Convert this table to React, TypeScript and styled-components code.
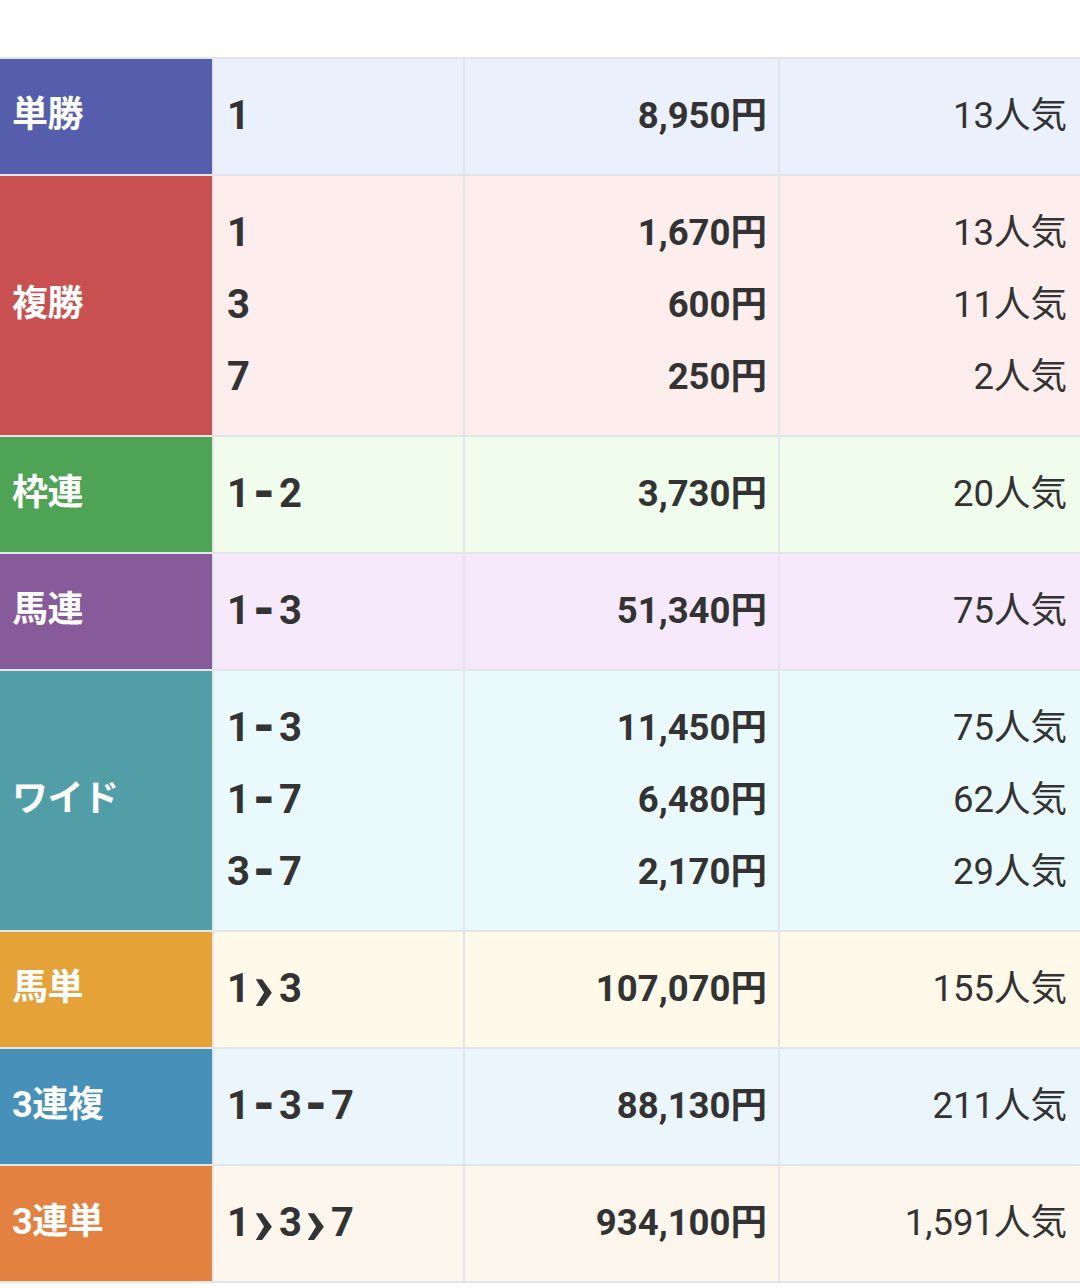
import React from "react";
import styled, { createGlobalStyle } from "styled-components";

const Global = createGlobalStyle`
  html, body { margin: 0; padding: 0; background: #ffffff; }
  body { font-family: Roboto, "Noto Sans CJK JP", sans-serif; color: #333333; }
`;

const Page = styled.div`
  width: 1080px;
  padding-top: 57px;
`;

const Table = styled.div`
  display: flex;
  flex-direction: column;
  gap: 2px;
  background: #e3e5ea;
  padding: 2px 0;
`;

const Row = styled.div`
  display: grid;
  grid-template-columns: 212px 249px 313px 1fr;
  column-gap: 2px;
`;

const Label = styled.div<{ $color: string }>`
  background: ${(p) => p.$color};
  color: #ffffff;
  font-weight: 700;
  font-size: 36px;
  line-height: 36px;
  display: flex;
  align-items: center;
  padding: 0 0 4px 12px;
  letter-spacing: -0.5px;
`;

const Cell = styled.div<{ $bg: string; $align?: "left" | "right"; $pr?: number }>`
  background: ${(p) => p.$bg};
  padding: 20.5px ${(p) => p.$pr ?? 13}px 22.5px 13px;
  display: flex;
  flex-direction: column;
  align-items: ${(p) => (p.$align === "right" ? "flex-end" : "flex-start")};
`;

const Line = styled.div<{ $weight: number; $size?: number }>`
  font-size: ${(p) => p.$size ?? 36.5}px;
  line-height: 72px;
  height: 72px;
  font-weight: ${(p) => p.$weight};
  color: #333333;
  white-space: nowrap;
`;

const Sep = styled.span<{ $kind: "dash" | "arrow" }>`
  display: inline-flex;
  justify-content: center;
  width: 15px;
  margin: 0 7.5px 0 6.5px;
  transform: ${(p) =>
    p.$kind === "dash" ? "scale(0.75, 1.5)" : "translateY(-1px) scale(1.75, 1.7)"};
`;

type Bet = {
  name: string;
  color: string;
  bg: string;
  items: { combo: string; price: string; pop: string }[];
};

const bets: Bet[] = [
  { name: "単勝", color: "#545ead", bg: "#eaf0fc", items: [{ combo: "1", price: "8,950円", pop: "13人気" }] },
  {
    name: "複勝",
    color: "#c85050",
    bg: "#fdeded",
    items: [
      { combo: "1", price: "1,670円", pop: "13人気" },
      { combo: "3", price: "600円", pop: "11人気" },
      { combo: "7", price: "250円", pop: "2人気" },
    ],
  },
  { name: "枠連", color: "#4ea354", bg: "#f0fcec", items: [{ combo: "1-2", price: "3,730円", pop: "20人気" }] },
  { name: "馬連", color: "#875a9a", bg: "#f7e9fc", items: [{ combo: "1-3", price: "51,340円", pop: "75人気" }] },
  {
    name: "ワイド",
    color: "#519ea7",
    bg: "#eaf9fc",
    items: [
      { combo: "1-3", price: "11,450円", pop: "75人気" },
      { combo: "1-7", price: "6,480円", pop: "62人気" },
      { combo: "3-7", price: "2,170円", pop: "29人気" },
    ],
  },
  { name: "馬単", color: "#e4a239", bg: "#fef9e9", items: [{ combo: "1>3", price: "107,070円", pop: "155人気" }] },
  { name: "3連複", color: "#4790b9", bg: "#ebf5fc", items: [{ combo: "1-3-7", price: "88,130円", pop: "211人気" }] },
  { name: "3連単", color: "#e38140", bg: "#fcf6ec", items: [{ combo: "1>3>7", price: "934,100円", pop: "1,591人気" }] },
];

function Combo({ text }: { text: string }) {
  const parts = text.split(/([->])/);
  return (
    <>
      {parts.map((p, i) =>
        p === "-" ? (
          <Sep key={i} $kind="dash">–</Sep>
        ) : p === ">" ? (
          <Sep key={i} $kind="arrow">›</Sep>
        ) : (
          <React.Fragment key={i}>{p}</React.Fragment>
        )
      )}
    </>
  );
}

export default function App() {
  return (
    <Page>
      <Global />
      <Table>
        {bets.map((b) => (
          <Row key={b.name}>
            <Label $color={b.color}>{b.name}</Label>
            <Cell $bg={b.bg}>
              {b.items.map((it, i) => (
                <Line key={i} $weight={700} $size={40}>
                  <Combo text={it.combo} />
                </Line>
              ))}
            </Cell>
            <Cell $bg={b.bg} $align="right" $pr={11}>
              {b.items.map((it, i) => (
                <Line key={i} $weight={700}>
                  {it.price}
                </Line>
              ))}
            </Cell>
            <Cell $bg={b.bg} $align="right">
              {b.items.map((it, i) => (
                <Line key={i} $weight={400}>
                  {it.pop}
                </Line>
              ))}
            </Cell>
          </Row>
        ))}
      </Table>
    </Page>
  );
}
